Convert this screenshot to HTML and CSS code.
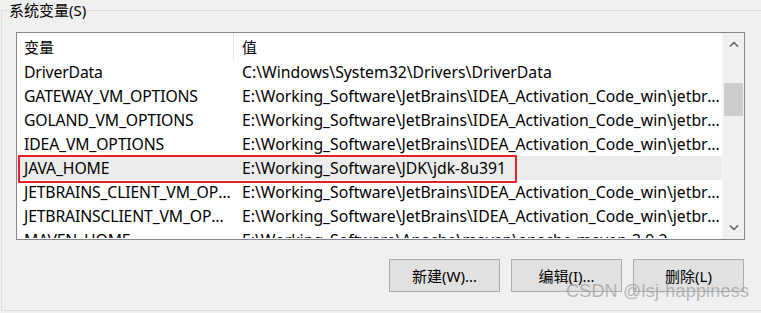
FILE: index.html
```html
<!DOCTYPE html>
<html>
  <head>
    <meta charset="UTF-8" />
    <link rel="stylesheet" href="styles.css">
  </head>

  <body>
    <fieldset class="group">
      <legend class="group-title">系统变量(S)</legend>

      <div class="listbox">
        <div class="list-main">
          <div class="list-head">
            <div class="col-name">变量</div>
            <div class="col-value">值</div>
          </div>
          <div class="list-body">
            <div class="row">
              <div class="col-name">DriverData</div>
              <div class="col-value">C:\Windows\System32\Drivers\DriverData</div>
            </div>
            <div class="row">
              <div class="col-name">GATEWAY_VM_OPTIONS</div>
              <div class="col-value">E:\Working_Software\JetBrains\IDEA_Activation_Code_win\jetbrains_agent\vmoptions\gateway.vmoptions</div>
            </div>
            <div class="row">
              <div class="col-name">GOLAND_VM_OPTIONS</div>
              <div class="col-value">E:\Working_Software\JetBrains\IDEA_Activation_Code_win\jetbrains_agent\vmoptions\goland.vmoptions</div>
            </div>
            <div class="row">
              <div class="col-name">IDEA_VM_OPTIONS</div>
              <div class="col-value">E:\Working_Software\JetBrains\IDEA_Activation_Code_win\jetbrains_agent\vmoptions\idea.vmoptions</div>
            </div>
            <div class="row selected">
              <div class="col-name">JAVA_HOME</div>
              <div class="col-value">E:\Working_Software\JDK\jdk-8u391</div>
              <div class="mark"></div>
            </div>
            <div class="row">
              <div class="col-name">JETBRAINS_CLIENT_VM_OPTIONS</div>
              <div class="col-value">E:\Working_Software\JetBrains\IDEA_Activation_Code_win\jetbrains_agent\vmoptions\jetbrains_client.vmoptions</div>
            </div>
            <div class="row">
              <div class="col-name">JETBRAINSCLIENT_VM_OPTIONS</div>
              <div class="col-value">E:\Working_Software\JetBrains\IDEA_Activation_Code_win\jetbrains_agent\vmoptions\jetbrainsclient.vmoptions</div>
            </div>
            <div class="row">
              <div class="col-name">MAVEN_HOME</div>
              <div class="col-value">E:\Working_Software\Apache\maven\apache-maven-3.9.2</div>
            </div>
          </div>
        </div>

        <div class="scrollbar">
          <div class="scroll-btn">
            <svg width="10" height="6" viewBox="0 0 10 6"><path d="M1 5.5 L5 1.5 L9 5.5" fill="none" stroke="#606060" stroke-width="1.5"/></svg>
          </div>
          <div class="scroll-track">
            <div class="scroll-thumb"></div>
          </div>
          <div class="scroll-btn">
            <svg width="10" height="6" viewBox="0 0 10 6"><path d="M1 0.5 L5 4.5 L9 0.5" fill="none" stroke="#606060" stroke-width="1.5"/></svg>
          </div>
        </div>
      </div>

      <div class="actions">
        <button class="btn">新建(W)...</button>
        <button class="btn">编辑(I)...</button>
        <button class="btn">删除(L)</button>
      </div>
    </fieldset>

    <div class="watermark">CSDN @lsj-happiness</div>
  </body>
</html>
```

FILE: styles.css
```css
html,
body {
  margin: 0;
  height: 313px;
  overflow: hidden;
  background: #f0f0f0;
  font-family: "Noto Sans", "Noto Sans CJK SC", sans-serif;
  font-size: 15px;
  color: #000;
}

/* group box runs off the right edge, so no right border */
.group {
  margin: 0 0 0 1px;
  height: 311px;
  padding: 12px 0 0 14px;
  border: 1px solid #dcdcdc;
  border-right: none;
  box-sizing: border-box;
}
.group-title {
  margin-left: -8px;
  padding: 0 1px;
  line-height: 20px;
}

.listbox {
  display: flex;
  width: 729px;
  height: 208px;
  box-sizing: border-box;
  border: 1px solid #828790;
  background: white;
}
.list-main {
  flex: 1;
  min-width: 0;
  overflow: hidden;
}
.list-head {
  display: flex;
  height: 27px;
  line-height: 29px;
}
.list-head .col-name {
  border-right: 1px solid #e5e5e5;
}
.list-body {
  height: 178px;
  overflow: hidden;
  font-size: 15.75px;
}
.row {
  position: relative;
  display: flex;
  height: 24px;
  line-height: 24px;
}
.row.selected {
  background: #ececec;
}
.col-name {
  width: 217px;
  padding-left: 7px;
  padding-right: 2px;
  box-sizing: border-box;
  white-space: nowrap;
  overflow: hidden;
  text-overflow: ellipsis;
  flex: none;
}
.list-body .col-name {
  letter-spacing: -0.15px;
}
.col-value {
  flex: 1;
  min-width: 0;
  padding-left: 8px;
  padding-right: 1px;
  white-space: nowrap;
  overflow: hidden;
  text-overflow: ellipsis;
}
.mark {
  position: absolute;
  left: 1px;
  top: -1px;
  width: 499px;
  height: 28px;
  box-sizing: border-box;
  border: 2px solid #e5222b;
}

.scrollbar {
  width: 22px;
  flex: none;
  display: flex;
  flex-direction: column;
  background: #f0f0f0;
  border-left: 1px solid #f6f6f6;
  box-sizing: border-box;
}
.scroll-btn {
  height: 22px;
  display: flex;
  align-items: center;
  justify-content: center;
}
.scroll-track {
  flex: 1;
  padding-top: 28px;
}
.scroll-thumb {
  margin: 0 1px;
  height: 33px;
  background: #cdcdcd;
}

.actions {
  display: flex;
  justify-content: flex-end;
  gap: 11px;
  width: 728px;
  margin-top: 19px;
}
.btn {
  width: 111px;
  height: 33px;
  background: #e1e1e1;
  border: 1px solid #adadad;
  font-family: inherit;
  font-size: 15px;
  color: #000;
  padding: 0;
}

.watermark {
  position: absolute;
  left: 566px;
  top: 281px;
  font-family: "Liberation Sans", sans-serif;
  font-size: 18px;
  color: rgba(160, 160, 160, 0.75);
  letter-spacing: 0.2px;
}
```
